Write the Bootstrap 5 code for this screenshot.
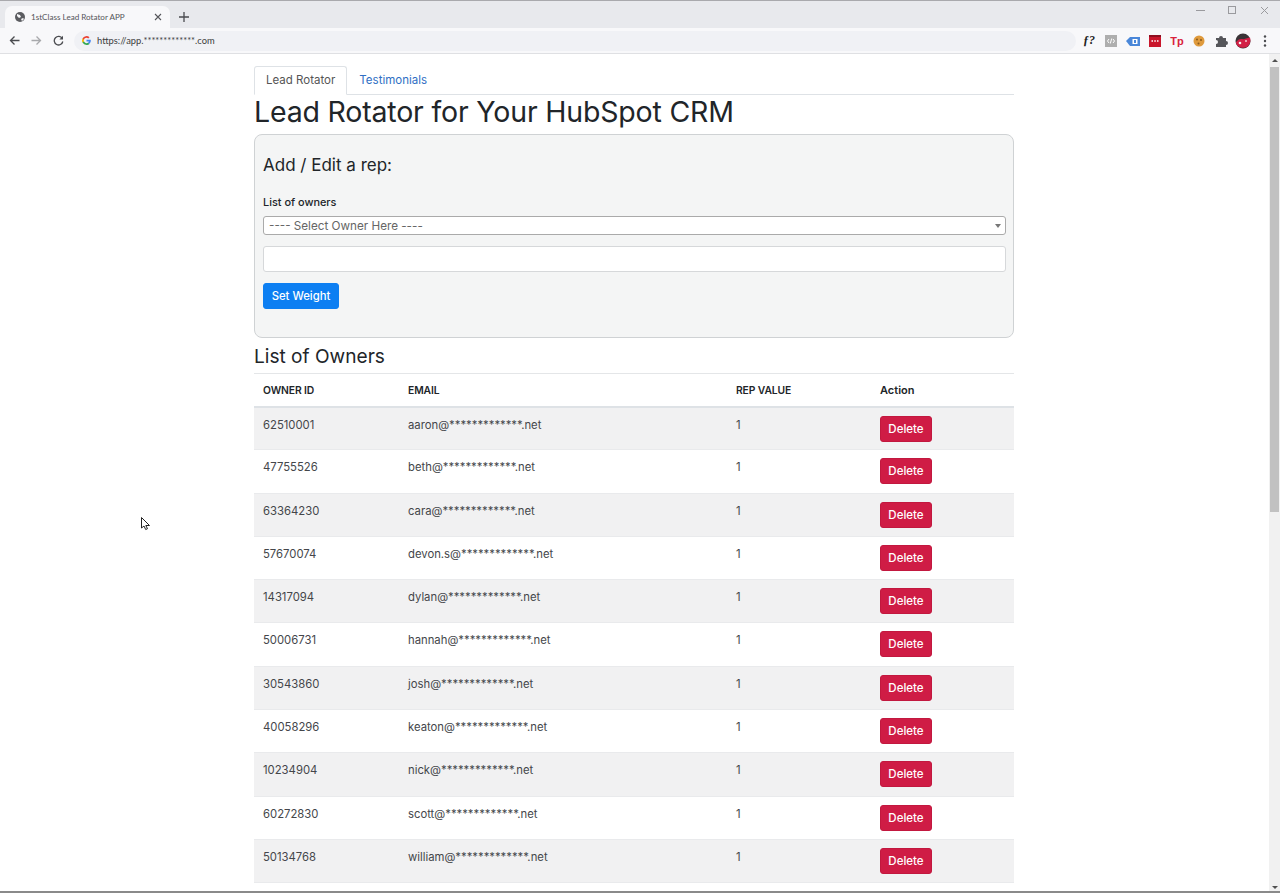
<!DOCTYPE html>
<html lang="en">
<head>
<meta charset="utf-8">
<title>1stClass Lead Rotator APP</title>
<link href="https://cdn.jsdelivr.net/npm/bootstrap@5.3.0/dist/css/bootstrap.min.css" rel="stylesheet">
<style>
html,body{height:893px;overflow:hidden;background:#fff}
body{font-family:Inter,"Liberation Sans",sans-serif;color:#212529}
.topedge{height:1px;background:#a9a9ad}
.tabstrip{height:27px;background:#e8e9ed}
.chrometab{width:165px;height:22px;margin-left:5px;background:#f8f8fa;border-radius:7px 7px 0 0;font:8.1px Lato,"Open Sans",sans-serif;color:#55565a;padding:0 8px 0 9px;gap:5px}
.chrometab span{flex:1}
.newtab{margin:0 0 6px 9px}
.winctl{margin-left:auto;gap:23px;padding-right:11px;height:18px}
.toolbar{height:26px;background:#f8f8fa;border-bottom:1px solid #dfe0e3;padding:0 7px 0 9px}
.navbtns{gap:11px;width:65px}
.omnibox{width:1002px;height:20px;border-radius:10px;background:#f0f1f5;padding:0 8px;gap:6px;font:9.35px Lato,"Open Sans",sans-serif;color:#3c3d40}
.exts{margin-left:auto;gap:6px}
.extslot{width:16px;height:16px}
.fmark{font:italic 700 12px "Liberation Serif",serif;color:#222}
.tpmark{font:700 11px "Liberation Sans",sans-serif;color:#d9233c}
.pagewrap{height:839px;overflow:hidden}
.pagemain{flex:1;overflow:hidden;min-width:0}
.scrolltrack{width:11px;background:#f1f1f1;position:relative;flex:none}
.scrollthumb{position:absolute;left:1px;right:1px;top:13px;height:445px;background:#c1c1c1}
.arrowup,.arrowdown{position:absolute;left:3px;width:0;height:0;border-left:3px solid transparent;border-right:3px solid transparent}
.arrowup{top:5px;border-bottom:3px solid #505050}
.arrowdown{bottom:4px;border-top:3px solid #505050}
.appcol{width:760px;margin-left:254px;padding-top:12px}
.tabsline{font-size:11.5px;border-bottom:1px solid #dee2e6;height:29px}
.tabsline .nav-link{padding:0 11px;height:29px;line-height:27px;color:#2f6fc4;border:1px solid transparent;border-radius:3px 3px 0 0}
.tabsline .nav-link.active{color:#555;border-color:#dee2e6 #dee2e6 #fff;background:#fff}
.maintitle{font-size:28.5px;font-weight:400;line-height:33px;margin:0;height:39px;color:#212529;letter-spacing:-.18px}
.formbox{height:204px;background:#f4f5f5;border:1px solid #cfd2d4;border-radius:8px;padding:20px 7px 0 8px;margin-bottom:6px}
.formtitle{font-size:17px;font-weight:400;line-height:20px;margin:0 0 19px}
.formlabel{font-size:10.9px;font-weight:500;line-height:16px;margin:0 0 6px;display:block;color:#212529}
.ownerselect{height:19px;font-size:11.7px;line-height:18px;padding:0 5px;background:#fff;border:1px solid #aaa;border-radius:3px;color:#666;margin-bottom:11px;position:relative}
.caretmark{position:absolute;right:4px;top:7px;width:0;height:0;border-left:3px solid transparent;border-right:3px solid transparent;border-top:4px solid #777}
.weightinput{height:26px;border:1px solid #d6d8da;border-radius:3px;background:#fff;margin-bottom:11px}
.setbtn{background:#0d7ff2;color:#fff;font-size:11.3px;font-weight:500;width:76px;height:26px;padding:0;line-height:24px;border:1px solid #0d7ff2;border-radius:3px}
.sectitle{font-size:19.1px;font-weight:400;line-height:24px;margin:0 0 5px}
.ownertable{font-size:11.3px;table-layout:fixed;width:760px;margin:0;border-top:1px solid #e4e6e8}
.ownertable th{height:33px;padding:1px 8px 0 9px;font-weight:600;font-size:10.3px;letter-spacing:-.1px;color:#212529;border-bottom:2px solid #dee2e6;vertical-align:middle}
.ownertable th:last-child{padding-left:8px;font-size:11px;letter-spacing:0}
.ownertable td{height:43.3px;padding:8px 8px 0 9px;vertical-align:top;color:#44464a;border-bottom:1px solid #e9eaec;line-height:18px;font-size:11.3px}
.ownertable td:last-child{padding-left:8px}
.ownertable tbody tr:nth-child(odd) td{background:#f1f1f2}
.ownertable tbody tr:nth-child(even) td{background:#fff}
.delbtn{display:block;width:52px;height:26px;background:#cf1c45;border:1px solid #c2183f;border-radius:3px;color:#fff;font-size:11.5px;font-weight:500;line-height:24px;padding:0;text-align:center}
.bottomline{height:2px;background:#8a8a8a;position:absolute;left:0;right:0;bottom:0}
.cursorptr{position:absolute;left:141px;top:517px}
</style>
</head>
<body class="m-0 position-relative">
<div class="topedge"></div>
<div class="tabstrip d-flex align-items-end">
  <div class="chrometab d-flex align-items-center">
    <svg width="12" height="12" viewBox="0 0 12 12"><circle cx="6" cy="6" r="5" fill="#5b5c60"/><path d="M3 3l3 1 1 2-2 1-2-2zM7 8l2-1 1 1-2 2z" fill="#f8f8fa"/></svg>
    <span>1stClass Lead Rotator APP</span>
    <svg width="8" height="8" viewBox="0 0 8 8"><path d="M1 1l6 6M7 1L1 7" stroke="#55565a" stroke-width="1.1"/></svg>
  </div>
  <svg class="newtab" width="10" height="10" viewBox="0 0 10 10"><path d="M5 0v10M0 5h10" stroke="#4a4b4f" stroke-width="1.3"/></svg>
  <div class="winctl d-flex align-self-start align-items-center">
    <svg width="9" height="9" viewBox="0 0 9 9"><path d="M0 4.500h9" stroke="#9a9a9e"/></svg>
    <svg width="9" height="9" viewBox="0 0 9 9"><rect x=".5" y=".5" width="7" height="7" fill="none" stroke="#9a9a9e"/></svg>
    <svg width="9" height="9" viewBox="0 0 9 9"><path d="M1 1l7 7M8 1L1 8" stroke="#9a9a9e"/></svg>
  </div>
</div>
<div class="toolbar d-flex align-items-center">
  <div class="navbtns d-flex align-items-center">
    <svg width="11" height="11" viewBox="0 0 11 11"><path d="M10.500 5.500H1.500M5.500 1.500l-4 4 4 4" fill="none" stroke="#4a4b4f" stroke-width="1.3"/></svg>
    <svg width="11" height="11" viewBox="0 0 11 11"><path d="M.5 5.500h9M5.500 1.500l4 4-4 4" fill="none" stroke="#a8a9ac" stroke-width="1.3"/></svg>
    <svg width="11" height="11" viewBox="0 0 11 11"><path d="M9.300 3.500A4.300 4.300 0 1 0 9.800 6.500" fill="none" stroke="#4a4b4f" stroke-width="1.3"/><path d="M10 .8v3.600H6.400z" fill="#4a4b4f"/></svg>
  </div>
  <div class="omnibox d-flex align-items-center">
    <svg width="9" height="9" viewBox="0 0 18 18"><path d="M17.600 9.200c0-.6-.1-1.200-.2-1.800H9v3.400h4.800a4.100 4.100 0 0 1-1.800 2.700v2.200h2.900c1.700-1.600 2.700-3.900 2.700-6.500z" fill="#4285f4"/><path d="M9 18c2.400 0 4.500-.8 5.900-2.200L12 13.500c-.8.500-1.800.9-3 .9-2.300 0-4.300-1.600-5-3.700H1v2.300A9 9 0 0 0 9 18z" fill="#34a853"/><path d="M4 10.700a5.400 5.400 0 0 1 0-3.400V5H1a9 9 0 0 0 0 8z" fill="#fbbc05"/><path d="M9 3.600c1.300 0 2.500.5 3.400 1.300L15 2.400A9 9 0 0 0 1 5l3 2.300c.7-2.100 2.700-3.700 5-3.700z" fill="#ea4335"/></svg>
    <span>https://app.*************.com</span>
  </div>
  <div class="exts d-flex align-items-center">
    <div class="extslot fmark d-flex align-items-center justify-content-center">ƒ?</div>
    <svg class="extslot" viewBox="0 0 16 16"><rect x="2" y="2" width="12" height="12" fill="#aeaeae"/><path d="M6 6L4.500 8 6 10M10 6l1.500 2L10 10M8.700 5.500l-1.400 5" fill="none" stroke="#fff"/></svg>
    <svg class="extslot" viewBox="0 0 16 16"><path d="M1 8l4-4h10v9H5z" fill="#4a87d9"/><rect x="7.500" y="6" width="5" height="5" fill="#fff"/><rect x="9" y="7" width="2" height="3" fill="#4a87d9"/></svg>
    <svg class="extslot" viewBox="0 0 16 16"><rect x="2" y="2" width="12" height="12" fill="#c9162c"/><rect x="2" y="2" width="12" height="2" fill="#8e0f20"/><path d="M4.500 8h1.500M7.300 8h1.500M10 8h1.500" stroke="#fff" stroke-width="1.300"/></svg>
    <div class="extslot tpmark d-flex align-items-center justify-content-center">Tp</div>
    <svg class="extslot" viewBox="0 0 16 16"><circle cx="8" cy="8" r="5.500" fill="#df9a3c"/><circle cx="6" cy="6.500" r="1" fill="#8a5a1e"/><circle cx="10" cy="7" r="1" fill="#8a5a1e"/><circle cx="7.500" cy="10.500" r="1" fill="#8a5a1e"/></svg>
    <svg class="extslot" viewBox="0 0 16 16"><path d="M3 5h3a2 2 0 1 1 4 0h3v3a2 2 0 1 1 0 4v2H3v-3a2 2 0 1 0 0-4z" fill="#55565a"/></svg>
    <svg class="extslot" viewBox="0 0 16 16"><circle cx="8" cy="8" r="7.500" fill="#3a3336"/><path d="M.8 9.500c2-3 4.200-4 6.200-3.500s4-.5 8-1.500c.5 2 .5 3.500 0 5.500a7.500 7.500 0 0 1-14.200-.5z" fill="#d21f45"/><circle cx="5" cy="10" r="1.300" fill="#f2f2f2"/><circle cx="11" cy="8" r="1" fill="#f2c8d0"/></svg>
    <svg class="extslot" viewBox="0 0 16 16"><circle cx="8" cy="3.500" r="1.200" fill="#4a4b4f"/><circle cx="8" cy="8" r="1.200" fill="#4a4b4f"/><circle cx="8" cy="12.500" r="1.200" fill="#4a4b4f"/></svg>
  </div>
</div>
<div class="pagewrap d-flex">
  <main class="pagemain">
    <div class="appcol">
      <ul class="nav tabsline d-flex">
        <li class="nav-item"><a class="nav-link active" href="#">Lead Rotator</a></li>
        <li class="nav-item"><a class="nav-link" href="#">Testimonials</a></li>
      </ul>
      <h1 class="maintitle">Lead Rotator for Your HubSpot CRM</h1>
      <section class="formbox">
        <h4 class="formtitle">Add / Edit a rep:</h4>
        <label class="formlabel">List of owners</label>
        <div class="ownerselect">---- Select Owner Here ----<span class="caretmark"></span></div>
        <div class="weightinput"></div>
        <button class="btn setbtn d-block" type="button">Set Weight</button>
      </section>
      <h3 class="sectitle">List of Owners</h3>
      <table class="table ownertable">
        <colgroup><col style="width:145px"><col style="width:328px"><col style="width:145px"><col style="width:142px"></colgroup>
        <thead><tr><th>OWNER ID</th><th>EMAIL</th><th>REP VALUE</th><th>Action</th></tr></thead>
        <tbody>
          <tr><td>62510001</td><td>aaron@*************.net</td><td>1</td><td><button class="btn delbtn" type="button">Delete</button></td></tr>
          <tr><td>47755526</td><td>beth@*************.net</td><td>1</td><td><button class="btn delbtn" type="button">Delete</button></td></tr>
          <tr><td>63364230</td><td>cara@*************.net</td><td>1</td><td><button class="btn delbtn" type="button">Delete</button></td></tr>
          <tr><td>57670074</td><td>devon.s@*************.net</td><td>1</td><td><button class="btn delbtn" type="button">Delete</button></td></tr>
          <tr><td>14317094</td><td>dylan@*************.net</td><td>1</td><td><button class="btn delbtn" type="button">Delete</button></td></tr>
          <tr><td>50006731</td><td>hannah@*************.net</td><td>1</td><td><button class="btn delbtn" type="button">Delete</button></td></tr>
          <tr><td>30543860</td><td>josh@*************.net</td><td>1</td><td><button class="btn delbtn" type="button">Delete</button></td></tr>
          <tr><td>40058296</td><td>keaton@*************.net</td><td>1</td><td><button class="btn delbtn" type="button">Delete</button></td></tr>
          <tr><td>10234904</td><td>nick@*************.net</td><td>1</td><td><button class="btn delbtn" type="button">Delete</button></td></tr>
          <tr><td>60272830</td><td>scott@*************.net</td><td>1</td><td><button class="btn delbtn" type="button">Delete</button></td></tr>
          <tr><td>50134768</td><td>william@*************.net</td><td>1</td><td><button class="btn delbtn" type="button">Delete</button></td></tr>
        </tbody>
      </table>
    </div>
  </main>
  <div class="scrolltrack"><span class="arrowup"></span><div class="scrollthumb"></div><span class="arrowdown"></span></div>
</div>
<div class="bottomline"></div>
<svg class="cursorptr" width="10" height="14" viewBox="0 0 10 14"><path d="M.5.500v10.500l2.500-2 1.700 3.500 1.800-.8L4.800 8.500H8.500z" fill="#fff" stroke="#222" stroke-width="1"/></svg>
<script src="https://cdn.jsdelivr.net/npm/bootstrap@5.3.0/dist/js/bootstrap.bundle.min.js"></script>
</body>
</html>
